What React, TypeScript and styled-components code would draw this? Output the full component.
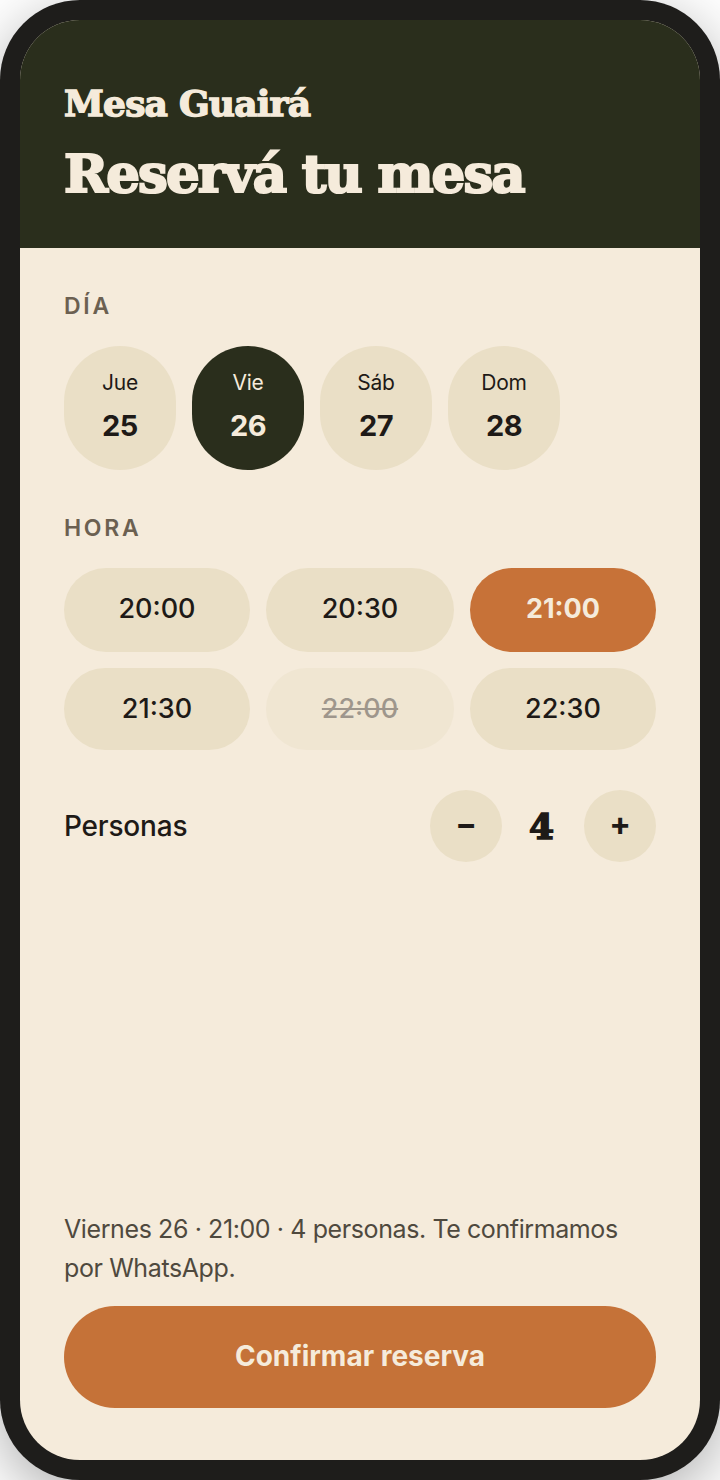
import React, { useState } from 'react';
import styled, { createGlobalStyle } from 'styled-components';

const GlobalStyle = createGlobalStyle`
  html, body {
    margin: 0;
    padding: 0;
    background: #ffffff;
  }
  * {
    box-sizing: border-box;
  }
`;

const bodyFont = `Inter, "Noto Sans", "Liberation Sans", sans-serif`;
const displayFont = `"DejaVu Serif", "Liberation Serif", serif`;

const Phone = styled.div`
  width: 720px;
  height: 1480px;
  padding: 20px;
  background: #1e1d1b;
  border-radius: 80px;
  box-shadow: 0 16px 60px rgba(0, 0, 0, 0.32);
`;

const Screen = styled.div`
  height: 100%;
  display: flex;
  flex-direction: column;
  background: #f5ebdb;
  border-radius: 60px;
  overflow: hidden;
  font-family: ${bodyFont};
  color: #1e1a17;
`;

const Header = styled.header`
  height: 228px;
  flex: none;
  padding: 61px 44px 0;
  background: #2a2e1c;
  color: #f5ebdb;
  font-family: ${displayFont};
`;

const Brand = styled.div`
  font-size: 36px;
  line-height: 44px;
  font-weight: 700;
  letter-spacing: -0.8px;
  -webkit-text-stroke: 1.4px #f5ebdb;
`;

const Title = styled.h1`
  margin: 18px 0 0;
  font-size: 53px;
  line-height: 60px;
  font-weight: 700;
  letter-spacing: -1.9px;
  -webkit-text-stroke: 2.2px #f5ebdb;
`;

const Content = styled.main`
  flex: 1;
  display: flex;
  flex-direction: column;
  padding: 44px 44px 52px;
`;

const Label = styled.div`
  font-size: 23px;
  line-height: 28px;
  font-weight: 600;
  letter-spacing: 2.7px;
  color: #6b6051;
`;

const DayRow = styled.div`
  display: flex;
  gap: 16px;
  margin: 26px 0 44px;
`;

const DayPill = styled.button<{ $active?: boolean }>`
  width: 112px;
  height: 124px;
  padding: 0 0 2px;
  border: 0;
  border-radius: 56px;
  display: flex;
  flex-direction: column;
  align-items: center;
  justify-content: center;
  gap: 14px;
  font-family: inherit;
  background: ${(p) => (p.$active ? '#2a2e1c' : '#eadfc6')};
  color: ${(p) => (p.$active ? '#f5ebdb' : '#1e1a17')};
`;

const DayName = styled.span`
  font-size: 21px;
  line-height: 24px;
  font-weight: 400;
  letter-spacing: -0.2px;
`;

const DayNumber = styled.span`
  font-size: 29px;
  line-height: 34px;
  font-weight: 700;
  letter-spacing: -0.5px;
`;

const TimeGrid = styled.div`
  display: grid;
  grid-template-columns: 186px 188px 186px;
  grid-template-rows: 84px 82px;
  gap: 16px;
  margin-top: 26px;
`;

const TimePill = styled.button<{ $active?: boolean; $off?: boolean }>`
  border: 0;
  padding: 0 0 3px;
  border-radius: 42px;
  font-family: inherit;
  font-size: 27px;
  font-weight: ${(p) => (p.$active ? 700 : 500)};
  background: ${(p) => (p.$active ? '#c77238' : '#eadfc6')};
  color: ${(p) => (p.$active ? '#f5ebdb' : '#1e1a17')};
  ${(p) => p.$off && 'opacity: 0.4; text-decoration: line-through;'}

  &:nth-child(n + 4) {
    padding-bottom: 1px;
  }
`;

const PeopleRow = styled.div`
  display: flex;
  align-items: center;
  justify-content: space-between;
  margin-top: 40px;
`;

const PeopleLabel = styled.span`
  font-size: 28px;
  font-weight: 500;
  letter-spacing: -0.2px;
`;

const Stepper = styled.div`
  display: flex;
  align-items: center;
`;

const StepButton = styled.button`
  width: 72px;
  height: 72px;
  padding: 0 0 5px;
  border: 0;
  border-radius: 50%;
  background: #eadfc6;
  color: #1e1a17;
  font-family: inherit;
  font-size: 32px;
  font-weight: 700;
`;

const Count = styled.span`
  width: 82px;
  padding-right: 3px;
  text-align: center;
  font-family: ${displayFont};
  font-size: 36px;
  font-weight: 700;
  -webkit-text-stroke: 1.6px #1e1a17;
`;

const Footer = styled.footer`
  margin-top: auto;
`;

const Summary = styled.p`
  margin: 0 0 18px;
  font-size: 25px;
  line-height: 39px;
  letter-spacing: -0.4px;
  color: #4f493e;
`;

const Confirm = styled.button`
  width: 100%;
  height: 102px;
  padding: 0 0 2px;
  border: 0;
  border-radius: 51px;
  background: #c57238;
  color: #f5ebdb;
  font-family: inherit;
  font-size: 28px;
  font-weight: 700;
`;

const days = [
  { name: 'Jue', num: 25 },
  { name: 'Vie', num: 26 },
  { name: 'Sáb', num: 27 },
  { name: 'Dom', num: 28 },
];

const times = ['20:00', '20:30', '21:00', '21:30', '22:00', '22:30'];

const App: React.FC = () => {
  const [day, setDay] = useState(26);
  const [time, setTime] = useState('21:00');
  const [people, setPeople] = useState(4);

  return (
    <>
      <GlobalStyle />
      <Phone>
        <Screen>
          <Header>
            <Brand>Mesa Guairá</Brand>
            <Title>Reservá tu mesa</Title>
          </Header>
          <Content>
            <Label>DÍA</Label>
            <DayRow>
              {days.map((d) => (
                <DayPill key={d.num} $active={d.num === day} onClick={() => setDay(d.num)}>
                  <DayName>{d.name}</DayName>
                  <DayNumber>{d.num}</DayNumber>
                </DayPill>
              ))}
            </DayRow>
            <Label>HORA</Label>
            <TimeGrid>
              {times.map((t) => (
                <TimePill
                  key={t}
                  $active={t === time}
                  $off={t === '22:00'}
                  disabled={t === '22:00'}
                  onClick={() => setTime(t)}
                >
                  {t}
                </TimePill>
              ))}
            </TimeGrid>
            <PeopleRow>
              <PeopleLabel>Personas</PeopleLabel>
              <Stepper>
                <StepButton onClick={() => setPeople(Math.max(1, people - 1))}>−</StepButton>
                <Count>{people}</Count>
                <StepButton onClick={() => setPeople(people + 1)}>+</StepButton>
              </Stepper>
            </PeopleRow>
            <Footer>
              <Summary>Viernes 26 · 21:00 · 4 personas. Te confirmamos por WhatsApp.</Summary>
              <Confirm>Confirmar reserva</Confirm>
            </Footer>
          </Content>
        </Screen>
      </Phone>
    </>
  );
};

export default App;
